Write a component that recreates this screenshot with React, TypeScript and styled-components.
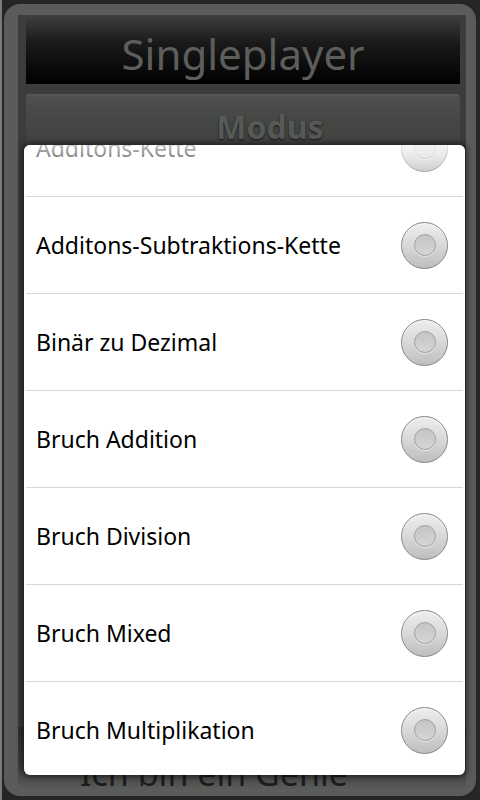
import styled, { createGlobalStyle } from 'styled-components';

const GlobalStyle = createGlobalStyle`
  html, body {
    margin: 0;
    padding: 0;
    background: #1e1e1e;
  }
  body {
    font-family: 'Noto Sans', 'Open Sans', sans-serif;
  }
`;

const modes = [
  'Additons-Kette',
  'Additons-Subtraktions-Kette',
  'Binär zu Dezimal',
  'Bruch Addition',
  'Bruch Division',
  'Bruch Mixed',
  'Bruch Multiplikation',
];

const App = () => {
  return (
    <>
      <GlobalStyle />
      <Screen>
        <Frame>
          <Panel>
            <TitleBar>Singleplayer</TitleBar>
            <ModeButton>Modus</ModeButton>
            <Spacer />
            <GenieButton>Ich bin ein Genie</GenieButton>
          </Panel>
        </Frame>

        <Dialog>
          <List>
            {modes.map((mode) => (
              <Row key={mode}>
                <Label>{mode}</Label>
                <Radio>
                  <RadioDot />
                </Radio>
              </Row>
            ))}
          </List>
          <TopFade />
        </Dialog>
      </Screen>
    </>
  );
};

export default App;

const Screen = styled.div`
  position: relative;
  width: 480px;
  height: 800px;
  box-sizing: border-box;
  padding: 4px 4px 4px 2px;
  background: #262626;
  border-left: 2px solid #7a7a7a;
  overflow: hidden;
`;

const Frame = styled.div`
  display: flex;
  height: 100%;
  box-sizing: border-box;
  padding: 11px 10px 5px 14px;
  border-radius: 16px;
  background: #5a5c5a;
`;

const Panel = styled.div`
  flex: 1;
  display: flex;
  flex-direction: column;
  padding: 0 6px 0 8px;
  background: #3b3d3b;
`;

const TitleBar = styled.div`
  display: flex;
  align-items: center;
  justify-content: center;
  height: 69px;
  box-sizing: border-box;
  padding-top: 8px;
  background: linear-gradient(#3e3f3e 0%, #1a1a1a 40%, #000 100%);
  color: #5c5e5c;
  font-size: 42px;
`;

const ModeButton = styled.div`
  margin-top: 10px;
  height: 64px;
  box-sizing: border-box;
  padding: 9px 0 0 54px;
  text-align: center;
  border-top: 2px solid #555755;
  border-radius: 3px;
  background: linear-gradient(#4e504e, #454745 40%, #3f413f);
  color: #575957;
  font-size: 32px;
  font-weight: 700;
  text-shadow: 0 1px 2px #151515;
`;

const Spacer = styled.div`
  flex: 1;
`;

const GenieButton = styled.div`
  display: flex;
  align-items: flex-end;
  height: 64px;
  margin: 0 -6px 0 -8px;
  box-sizing: border-box;
  padding: 0 0 0 62px;
  background: linear-gradient(#2e302e, #3c3e3c 60%, #5c5e5c);
  color: #1c1c1c;
  font-size: 34px;
  line-height: 36px;
`;

const Dialog = styled.div`
  position: absolute;
  top: 145px;
  left: 22px;
  width: 441px;
  height: 630px;
  overflow: hidden;
  background: #fff;
  border-radius: 6px;
  box-shadow: 0 0 6px 2px rgba(0, 0, 0, 0.55);
`;

const List = styled.div`
  margin-top: -45px;
  padding: 0 2px;
`;

const Row = styled.div`
  display: flex;
  align-items: center;
  justify-content: space-between;
  height: 96px;
  padding: 0 15px 0 10px;
  border-bottom: 1px solid #d8d8d8;
`;

const Label = styled.span`
  color: #000;
  font-size: 23px;
`;

const Radio = styled.div`
  display: flex;
  align-items: center;
  justify-content: center;
  width: 47px;
  height: 47px;
  box-sizing: border-box;
  border-radius: 50%;
  border: 1px solid #858585;
  background: linear-gradient(#eeeeee, #d8d8d8 50%, #bebebe);
  box-shadow: inset 0 1px 1px #fafafa;
`;

const RadioDot = styled.div`
  width: 22px;
  height: 22px;
  box-sizing: border-box;
  border-radius: 50%;
  border: 1px solid #a2a2a2;
  background: linear-gradient(#c4c4c4, #d6d6d6);
  box-shadow: 0 1px 0 #e8e8e8;
`;

const TopFade = styled.div`
  position: absolute;
  top: 0;
  left: 0;
  right: 0;
  height: 38px;
  background: linear-gradient(rgba(255, 255, 255, 0.75), rgba(255, 255, 255, 0));
  pointer-events: none;
`;
